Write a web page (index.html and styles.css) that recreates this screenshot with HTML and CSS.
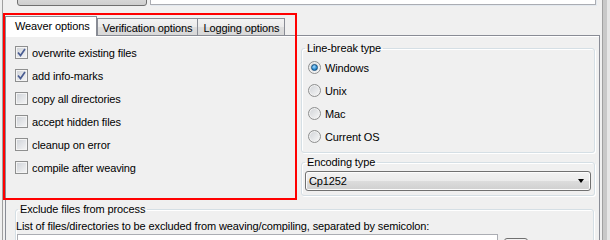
FILE: index.html
```html
<!DOCTYPE html>
<html>
<head>
    <title>Weaver options</title>
    <link rel="stylesheet" href="styles.css">
</head>
<body>
    <div class="window">
        <div class="page">
            <!-- only the bottom edge of this row is in view -->
            <div class="top-row">
                <div class="top-button"></div>
                <div class="top-field"></div>
            </div>

            <div class="tabs">
                <div class="tab active">Weaver options</div>
                <div class="tab">Verification options</div>
                <div class="tab">Logging options</div>
            </div>

            <div class="tab-panel">
                <div class="columns">
                    <div class="options">
                        <div class="row"><span class="check on"><svg width="9" height="9" viewBox="0 0 9 9"><path d="M1 4.5 L3.5 7.5 L8 1" fill="none" stroke="#4a5d92" stroke-width="1.7"/></svg></span>overwrite existing files</div>
                        <div class="row"><span class="check on"><svg width="9" height="9" viewBox="0 0 9 9"><path d="M1 4.5 L3.5 7.5 L8 1" fill="none" stroke="#4a5d92" stroke-width="1.7"/></svg></span>add info-marks</div>
                        <div class="row"><span class="check"></span>copy all directories</div>
                        <div class="row"><span class="check"></span>accept hidden files</div>
                        <div class="row"><span class="check"></span>cleanup on error</div>
                        <div class="row"><span class="check"></span>compile after weaving</div>
                    </div>

                    <div class="side">
                        <fieldset class="group line-break">
                            <legend>Line-break type</legend>
                            <div class="row"><span class="radio on"></span>Windows</div>
                            <div class="row"><span class="radio"></span>Unix</div>
                            <div class="row"><span class="radio"></span>Mac</div>
                            <div class="row"><span class="radio"></span>Current OS</div>
                        </fieldset>

                        <fieldset class="group encoding">
                            <legend>Encoding type</legend>
                            <div class="combo">
                                <span>Cp1252</span>
                                <span class="arrow"></span>
                            </div>
                        </fieldset>
                    </div>
                </div>

                <fieldset class="group exclude">
                    <legend>Exclude files from process</legend>
                    <div class="hint">List of files/directories to be excluded from weaving/compiling, separated by semicolon:</div>
                    <div class="field-row">
                        <div class="text-field"></div>
                        <div class="small-button"></div>
                    </div>
                </fieldset>
            </div>
        </div>
        <div class="scrollbar"></div>
    </div>

    <!-- annotation frame drawn over the screenshot -->
    <div class="highlight"></div>
</body>
</html>
```

FILE: styles.css
```css
body {
    margin: 0;
    width: 610px;
    height: 240px;
    overflow: hidden;
    position: relative;
    background-color: #f0f0f0;
    font-family: 'Liberation Sans', Arial, sans-serif;
    font-size: 11px;
    letter-spacing: -0.12px;
    color: #000;
}

.window {
    display: flex;
    height: 240px;
}

.page {
    width: 599px;
    margin-left: 2px;
    border-left: 1px solid #a0a0a0;
}

/* row cut off by the top of the picture */
.top-row {
    display: flex;
    align-items: flex-end;
    height: 6px;
    overflow: hidden;
    padding-left: 14px;
}

.top-button {
    box-sizing: border-box;
    width: 130px;
    height: 22px;
    flex-shrink: 0;
    border: 1px solid #707070;
    border-radius: 3px;
    background: linear-gradient(#f2f2f2, #ebebeb 50%, #dddddd 50%, #cfcfcf);
}

.top-field {
    box-sizing: border-box;
    width: 446px;
    height: 21px;
    margin-left: 3px;
    margin-bottom: 1px;
    border: 1px solid #abadb3;
    background: #fff;
    box-shadow: 1px 1px 0 #e3e9ef;
}

/* tab folder */
.tabs {
    display: flex;
    align-items: flex-start;
    height: 19px;
    margin-top: 10px;
    margin-left: 2px;
}

.tab {
    box-sizing: border-box;
    height: 17px;
    margin-top: 2px;
    padding: 2px 5px 0 5px;
    line-height: 14px;
    border: 1px solid #898c95;
    border-bottom: none;
    background: linear-gradient(#f3f3f3, #ebebeb 50%, #dedede 50%, #d8d8d8);
    white-space: nowrap;
}

.tab + .tab {
    margin-left: -1px;
}

.tab.active {
    position: relative;
    z-index: 1;
    height: 20px;
    margin-top: 0;
    padding: 2px 6px 0 9px;
    background: #fff;
}

.tab.active + .tab {
    margin-left: 0;
}

.tab-panel {
    height: 220px;
    margin-left: 2px;
    width: 593px;
    border: 1px solid #898c95;
    background: #f0f0f0;
    box-shadow: inset 0 1px #fff;
    padding-top: 5px;
}

.columns {
    display: grid;
    grid-template-columns: 1fr 294px;
    padding-right: 4px;
}

.options {
    padding-left: 9px;
}

.row {
    display: flex;
    align-items: center;
    height: 23px;
    white-space: nowrap;
}

.check {
    box-sizing: border-box;
    width: 13px;
    height: 13px;
    margin-right: 4px;
    border: 1px solid #8e8f8f;
    background: linear-gradient(135deg, #cdd1d7, #f6f6f6);
    box-shadow: inset 0 0 0 1px #f4f4f4;
    display: flex;
    align-items: center;
    justify-content: center;
}

.radio {
    box-sizing: border-box;
    width: 13px;
    height: 13px;
    margin-left: 3px;
    margin-right: 4px;
    border: 1px solid #8e8f8f;
    border-radius: 50%;
    background: linear-gradient(135deg, #cfd2d6, #f8f8f8);
    box-shadow: inset 0 0 0 1px #f2f2f2;
    display: flex;
    align-items: center;
    justify-content: center;
}

.radio.on::after {
    content: "";
    width: 5px;
    height: 5px;
    border-radius: 50%;
    border: 1px solid #16507e;
    background: radial-gradient(circle at 40% 35%, #a6dcff, #2a8ad0 60%, #0d5d9a);
}

/* group boxes */
.group {
    margin: 0;
    padding: 0 3px;
    min-width: 0;
    border: 1px solid #d5dfe5;
    border-radius: 3px;
    box-shadow: inset 1px 1px 0 #fff, 1px 1px 0 #fff;
}

.group legend {
    padding: 0 2px;
    line-height: 14px;
}

.line-break {
    padding-top: 1px;
    padding-bottom: 4px;
}

.encoding {
    margin-top: 2px;
    padding-top: 2px;
    padding-bottom: 4px;
}

.combo {
    box-sizing: border-box;
    height: 20px;
    border: 1px solid #707070;
    border-radius: 3px;
    background: linear-gradient(#f2f2f2, #ebebeb 50%, #dddddd 50%, #cfcfcf);
    box-shadow: inset 0 0 0 1px #fcfcfc;
    display: flex;
    align-items: center;
    justify-content: space-between;
    padding: 0 6px 0 3px;
}

.arrow {
    width: 0;
    height: 0;
    border-left: 3.5px solid transparent;
    border-right: 3.5px solid transparent;
    border-top: 4px solid #000;
}

.exclude {
    margin: 6px 5px 0 9px;
    padding: 0;
}

.exclude legend {
    margin-left: 2px;
}

.hint {
    margin-top: 3px;
    line-height: 14px;
    white-space: nowrap;
}

.field-row {
    display: flex;
    gap: 6px;
    margin-top: 1px;
}

.text-field {
    box-sizing: border-box;
    width: 481px;
    height: 21px;
    margin-left: 1px;
    border: 1px solid #abadb3;
    background: #fff;
}

.small-button {
    box-sizing: border-box;
    width: 24px;
    height: 22px;
    margin-top: 4px;
    border: 1px solid #707070;
    border-radius: 3px;
    background: linear-gradient(#f2f2f2, #ebebeb 50%, #dddddd 50%, #cfcfcf);
}

.scrollbar {
    width: 4px;
    margin-left: 2px;
    border-left: 1px solid #a0a0a0;
    border-right: 3px solid #e6e6e6;
    background: #c8c8c8;
}

.highlight {
    position: absolute;
    left: 3px;
    top: 13px;
    width: 294px;
    height: 187px;
    box-sizing: border-box;
    border: 2px solid #ff0000;
}
```
